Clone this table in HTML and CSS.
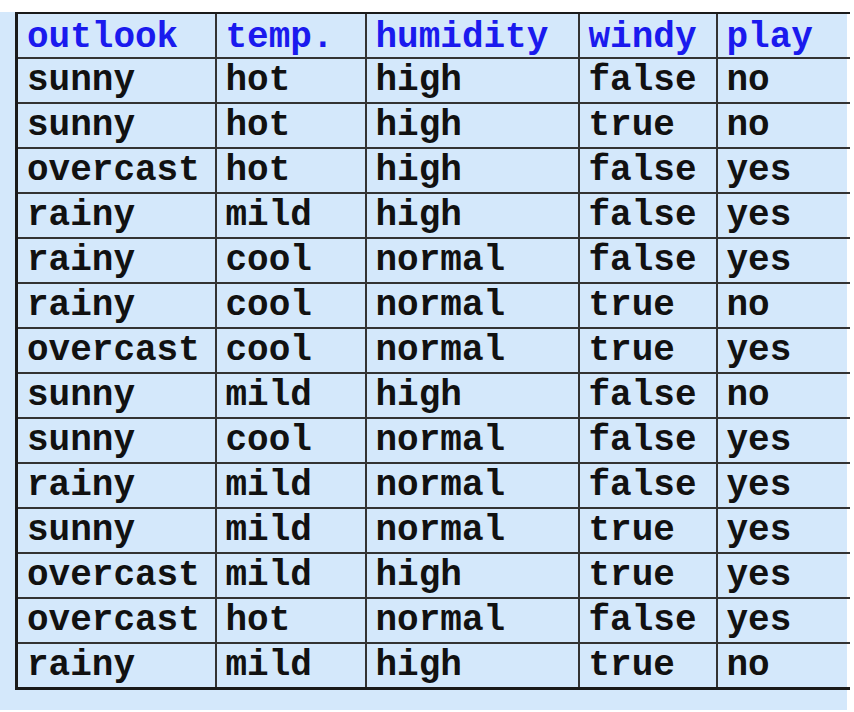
FILE: index.html
```html
<!DOCTYPE html>
<html>
<head>
<meta charset="utf-8">
<link rel="stylesheet" href="styles.css">
</head>
<body>
<div class="panel">
<table class="data">
<colgroup><col class="c1"><col class="c2"><col class="c3"><col class="c4"><col class="c5"></colgroup>
<thead>
<tr><th>outlook</th><th>temp.</th><th>humidity</th><th>windy</th><th>play</th></tr>
</thead>
<tbody>
<tr><td>sunny</td><td>hot</td><td>high</td><td>false</td><td>no</td></tr>
<tr><td>sunny</td><td>hot</td><td>high</td><td>true</td><td>no</td></tr>
<tr><td>overcast</td><td>hot</td><td>high</td><td>false</td><td>yes</td></tr>
<tr><td>rainy</td><td>mild</td><td>high</td><td>false</td><td>yes</td></tr>
<tr><td>rainy</td><td>cool</td><td>normal</td><td>false</td><td>yes</td></tr>
<tr><td>rainy</td><td>cool</td><td>normal</td><td>true</td><td>no</td></tr>
<tr><td>overcast</td><td>cool</td><td>normal</td><td>true</td><td>yes</td></tr>
<tr><td>sunny</td><td>mild</td><td>high</td><td>false</td><td>no</td></tr>
<tr><td>sunny</td><td>cool</td><td>normal</td><td>false</td><td>yes</td></tr>
<tr><td>rainy</td><td>mild</td><td>normal</td><td>false</td><td>yes</td></tr>
<tr><td>sunny</td><td>mild</td><td>normal</td><td>true</td><td>yes</td></tr>
<tr><td>overcast</td><td>mild</td><td>high</td><td>true</td><td>yes</td></tr>
<tr><td>overcast</td><td>hot</td><td>normal</td><td>false</td><td>yes</td></tr>
<tr><td>rainy</td><td>mild</td><td>high</td><td>true</td><td>no</td></tr>
</tbody>
</table>
</div>
</body>
</html>
```

FILE: styles.css
```css
html, body {
  margin: 0;
  padding: 0;
  background: #ffffff;
}
.panel {
  margin-top: 12px;
  width: 847px;
  height: 698px;
  background: #d4e8fb;
  padding-left: 15px;
  box-sizing: border-box;
}
.data {
  border-collapse: collapse;
  table-layout: fixed;
  width: 833px;
  border-top: 2px solid #1a1a1a;
  border-left: 3px solid #1a1a1a;
  border-bottom: 3px solid #1a1a1a;
  font-family: "Liberation Mono", "Courier New", monospace;
  font-weight: bold;
  font-size: 36px;
}
.c1 { width: 199px; }
.c2 { width: 150px; }
.c3 { width: 213px; }
.c4 { width: 138px; }
.c5 { width: 133px; }
.data th, .data td {
  height: 45px;
  padding: 4px 0 0 9px;
  box-sizing: border-box;
  text-align: left;
  vertical-align: top;
  line-height: 36px;
  border-top: 2px solid #333333;
  border-bottom: 2px solid #333333;
  border-left: 2px solid #333333;
  white-space: nowrap;
  color: #111111;
}
.data th {
  color: #1a1aee;
  font-weight: bold;
  padding-top: 6px;
}
.data th:first-child, .data td:first-child {
  border-left: 3px solid #1a1a1a;
}
.data tbody tr:last-child td {
  border-bottom: 3px solid #1a1a1a;
}
.data thead th {
  border-top: 2px solid #1a1a1a;
}
```
